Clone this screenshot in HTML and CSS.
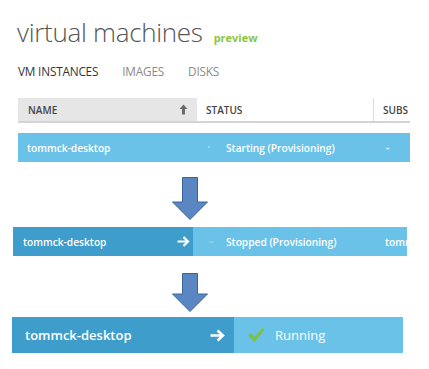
FILE: index.html
```html
<!DOCTYPE html>
<html>
<head>
<meta charset="utf-8">
<link rel="stylesheet" href="styles.css">
</head>
<body>
<div class="page">
  <div class="title-row">
    <h1 class="title">virtual machines</h1>
    <span class="preview">preview</span>
  </div>
  <div class="tabs">
    <span class="tab active">VM INSTANCES</span>
    <span class="tab">IMAGES</span>
    <span class="tab">DISKS</span>
  </div>
  <div class="thead">
    <div class="th th-name"><span>NAME</span>
      <svg class="sort" width="9" height="11" viewBox="0 0 9 11"><path d="M4.5 0.5 L8.5 5 H6 V10.5 H3 V5 H0.5 Z" fill="#6a6a6a"/></svg>
    </div>
    <div class="th th-status">STATUS</div>
    <div class="th th-subs">SUBS</div>
  </div>
  <div class="row row1">
    <div class="c-name">tommck-desktop</div>
    <div class="c-status"><span class="dot">&#xB7;</span>Starting (Provisioning)</div>
    <div class="c-subs">-</div>
  </div>
  <div class="down down1">
    <svg width="37" height="45" viewBox="0 0 37 45"><path d="M10.5 1.5 H25.5 V26 H35.5 L18 43.5 L0.5 26 H10.5 Z" fill="#5a87c2" stroke="#3b659a" stroke-width="1"/></svg>
  </div>
  <div class="row row2">
    <div class="c-name dark"><span>tommck-desktop</span>
      <svg class="arr" width="13" height="11" viewBox="0 0 13 11"><path d="M0.5 5.5 H11 M6.5 1 L11 5.5 L6.5 10" fill="none" stroke="#ffffff" stroke-width="2.2" stroke-linejoin="miter"/></svg>
    </div>
    <div class="c-status"><span class="dot2">&#xB7;&#xB7;</span>Stopped (Provisioning)</div>
    <div class="c-subs">tommck</div>
  </div>
  <div class="down down2">
    <svg width="37" height="41" viewBox="0 0 37 41"><path d="M10.5 1.5 H25.5 V22 H35.5 L18 39.5 L0.5 22 H10.5 Z" fill="#5a87c2" stroke="#3b659a" stroke-width="1"/></svg>
  </div>
  <div class="row row3">
    <div class="c-name dark"><span>tommck-desktop</span>
      <svg class="arr" width="15" height="13" viewBox="0 0 15 13"><path d="M0.5 6.5 H13 M7.5 1.5 L13 6.5 L7.5 11.5" fill="none" stroke="#ffffff" stroke-width="2.5" stroke-linejoin="miter"/></svg>
    </div>
    <div class="c-status">
      <svg class="check" width="18" height="16" viewBox="0 0 18 16"><path d="M1 8.5 L4 6 L7.5 10 L15.5 1 L17.5 3 L7.5 15 Z" fill="#7fc241"/></svg>
      <span>Running</span>
    </div>
  </div>
</div>
</body>
</html>
```
FILE: styles.css
```css
html, body {
  margin: 0;
  padding: 0;
  background: #ffffff;
}
body {
  font-family: "Open Sans", "Noto Sans", sans-serif;
  width: 429px;
  height: 369px;
  overflow: hidden;
}
.page {
  display: flex;
  flex-direction: column;
  padding-top: 12px;
}
.title-row {
  display: flex;
  align-items: baseline;
  margin-left: 17px;
  height: 40px;
}
.title {
  margin: 0;
  font-weight: 300;
  font-size: 26px;
  color: #555555;
  letter-spacing: -0.3px;
  line-height: 40px;
}
.preview {
  margin-left: 11px;
  font-size: 11px;
  font-weight: 700;
  color: #8cc63f;
}
.tabs {
  display: flex;
  gap: 24px;
  margin-left: 18px;
  margin-top: 11px;
  height: 16px;
  font-size: 11.8px;
  line-height: 16px;
  letter-spacing: -0.2px;
}
.tab { color: #8a8a8a; }
.tab.active { color: #333333; }

.thead {
  display: flex;
  margin-left: 18px;
  margin-top: 19px;
  width: 392px;
  height: 23px;
  border-bottom: 2px solid #d4d4d4;
  font-size: 10px;
  font-weight: 600;
  color: #444444;
}
.th {
  display: flex;
  align-items: center;
  box-sizing: border-box;
  flex-shrink: 0;
}
.th-name {
  width: 179px;
  background: #e6e6e6;
  padding-left: 10px;
  padding-right: 9px;
  justify-content: space-between;
}
.sort { display: block; }
.th-status {
  width: 177px;
  padding-left: 9px;
  border-right: 1px solid #dddddd;
  height: 23px;
}
.th-subs {
  padding-left: 9px;
}

.row {
  display: flex;
  color: #ffffff;
  background: #6bc2e9;
  font-weight: 600;
  box-sizing: border-box;
}
.row > div {
  display: flex;
  align-items: center;
  box-sizing: border-box;
  flex-shrink: 0;
  white-space: nowrap;
}
.row1 {
  margin-left: 18px;
  margin-top: 10px;
  width: 392px;
  height: 29px;
  font-size: 10.2px;
}
.row1 .c-name { width: 179px; padding-left: 9px; }
.row1 .c-status { width: 177px; padding-left: 10px; }
.row1 .c-subs { padding-left: 12px; }
.dot { color: #a8d8ef; width: 19px; font-size: 12px; }
.dot2 { color: #a8d8ef; width: 17px; font-size: 11px; letter-spacing: -1px; }

.down {
  display: flex;
  margin-left: 172px;
}
.down1 { margin-top: 14px; height: 51px; }
.down2 { margin-top: 16px; height: 45px; }
.down svg { display: block; }

.row2 {
  margin-left: 13px;
  width: 394px;
  height: 29px;
  font-size: 10.2px;
  overflow: hidden;
}
.dark {
  background: #3e9dcb;
  justify-content: space-between;
}
.row2 .c-name { width: 180px; padding-left: 10px; padding-right: 3px; }
.row2 .c-status { width: 192px; padding-left: 16px; }
.row2 .c-subs { padding-left: 0; }
.arr { display: block; }

.row3 {
  margin-left: 12px;
  width: 391px;
  height: 36px;
  font-size: 13px;
}
.row3 .c-name { width: 222px; padding-left: 13px; padding-right: 9px; }
.row3 .c-status { padding-left: 13px; gap: 10px; font-weight: 400; }
.check { display: block; }
```
